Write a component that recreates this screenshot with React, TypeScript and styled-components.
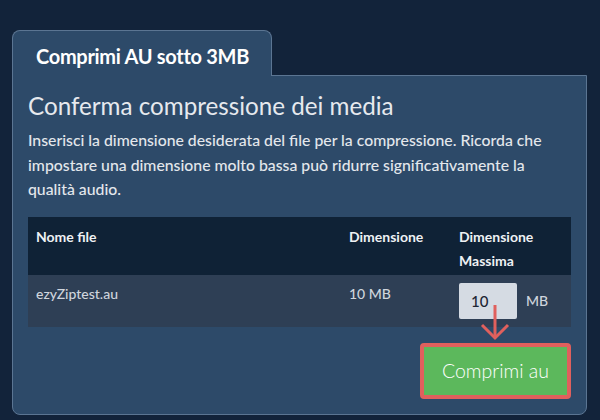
import React, { useState } from 'react';
import styled, { createGlobalStyle } from 'styled-components';

const GlobalStyle = createGlobalStyle`
  html, body {
    margin: 0;
    padding: 0;
    background: #12233a;
    font-family: Lato, "Open Sans", sans-serif;
  }
`;

const Page = styled.div`
  width: 600px;
  height: 420px;
  box-sizing: border-box;
  padding: 30px 13px 0 12px;
  background: #12233a;
`;

const Tab = styled.div`
  display: inline-block;
  width: 260px;
  height: 46px;
  box-sizing: border-box;
  padding: 13px 0 0 23px;
  background: #2d4a69;
  border: 1px solid #5b7592;
  border-bottom: none;
  border-radius: 8px 8px 0 0;
  color: #fff;
  font-size: 20px;
  font-weight: 700;
  letter-spacing: -0.3px;
  position: relative;
  z-index: 1;
  margin-bottom: -1px;
`;

const Panel = styled.div`
  box-sizing: border-box;
  height: 340px;
  background: #2d4a69;
  border: 1px solid #5b7592;
  border-radius: 0 0 8px 8px;
  padding: 14px 15px 0 15px;
  display: flex;
  flex-direction: column;
`;

const Heading = styled.h2`
  margin: 0;
  font-size: 24.2px;
  font-weight: 400;
  color: #e6e9ee;
  line-height: 32px;
`;

const Intro = styled.p`
  margin: 6px 0 0 0;
  font-size: 15.8px;
  font-weight: 500;
  line-height: 24.5px;
  color: #e3e7ec;
`;

const Table = styled.div`
  margin-top: 15px;
  display: grid;
  grid-template-columns: 313px 110px 1fr;
`;

const HeadCell = styled.div`
  background: #0f2236;
  height: 58px;
  box-sizing: border-box;
  padding: 8px 8px 0 8px;
  font-size: 14px;
  font-weight: 700;
  line-height: 24px;
  color: #eef1f4;
`;

const Cell = styled.div`
  background: #2e3f55;
  height: 52px;
  box-sizing: border-box;
  padding: 8px 8px 0 8px;
  font-size: 14px;
  font-weight: 500;
  color: #cfd5dd;
  line-height: 22px;
`;

const InputRow = styled.div`
  display: flex;
  align-items: center;
  gap: 9px;
  position: relative;
`;

const SizeInput = styled.input`
  width: 58px;
  height: 36px;
  box-sizing: border-box;
  border: none;
  border-radius: 2px;
  background: #d5dbe3;
  padding: 0 0 0 12px;
  font-family: Lato, "Open Sans", sans-serif;
  font-size: 15px;
  font-weight: 500;
  color: #1d2634;
  outline: none;
`;

const Unit = styled.span`
  font-size: 14px;
  font-weight: 500;
  color: #cfd5dd;
`;

const Arrow = styled.svg`
  position: absolute;
  left: 21px;
  top: 22px;
  overflow: visible;
`;

const Footer = styled.div`
  display: flex;
  justify-content: flex-end;
  margin-top: 16px;
`;

const ActionButton = styled.button`
  width: 151px;
  height: 56px;
  box-sizing: border-box;
  background: #5cb85c;
  border: 4px solid #e0605d;
  border-radius: 4px;
  color: #fff;
  font-family: Lato, "Open Sans", sans-serif;
  font-size: 19.5px;
  font-weight: 300;
  cursor: pointer;
`;

const App: React.FC = () => {
  const [maxSize, setMaxSize] = useState('10');

  return (
    <Page>
      <GlobalStyle />
      <Tab>Comprimi AU sotto 3MB</Tab>
      <Panel>
        <Heading>Conferma compressione dei media</Heading>
        <Intro>
          Inserisci la dimensione desiderata del file per la compressione. Ricorda che impostare una dimensione molto bassa può ridurre significativamente la qualità audio.
        </Intro>
        <Table>
          <HeadCell>Nome file</HeadCell>
          <HeadCell>Dimensione</HeadCell>
          <HeadCell>Dimensione<br />Massima</HeadCell>
          <Cell>ezyZiptest.au</Cell>
          <Cell>10 MB</Cell>
          <Cell>
            <InputRow>
              <SizeInput value={maxSize} onChange={(e) => setMaxSize(e.target.value)} />
              <Unit>MB</Unit>
              <Arrow width="30" height="36" viewBox="0 0 30 36">
                <path d="M15 0 V33" stroke="#e0605d" strokeWidth="3" fill="none" />
                <path d="M2 20 L15 33 L28 20" stroke="#e0605d" strokeWidth="3" fill="none" />
              </Arrow>
            </InputRow>
          </Cell>
        </Table>
        <Footer>
          <ActionButton>Comprimi au</ActionButton>
        </Footer>
      </Panel>
    </Page>
  );
};

export default App;
